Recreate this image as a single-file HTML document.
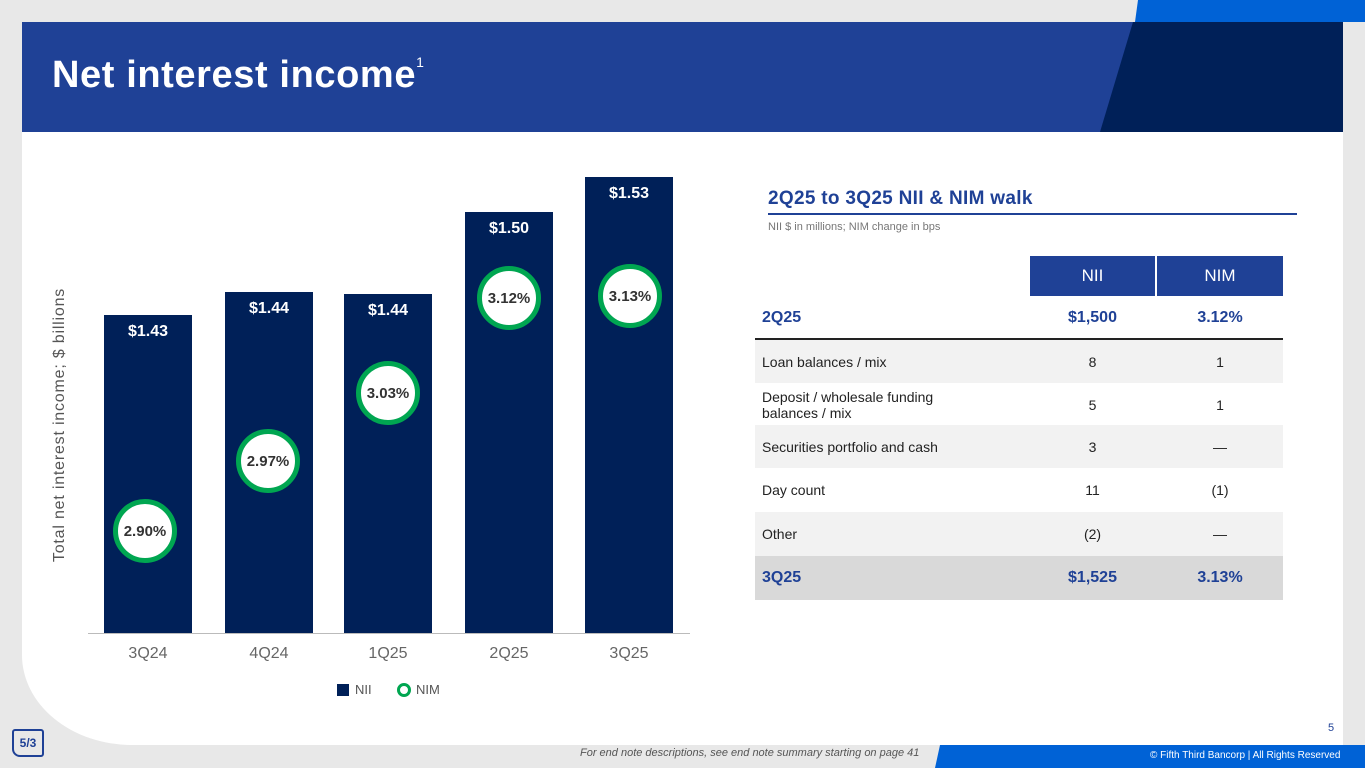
<!DOCTYPE html>
<html><head><meta charset="utf-8"><style>
*{margin:0;padding:0;box-sizing:border-box}
body{width:1365px;height:768px;overflow:hidden;background:#e8e8e8;font-family:"Liberation Sans",sans-serif;position:relative}
.a{position:absolute}
.panel{left:22px;top:22px;width:1321px;height:723px;background:#fff;border-bottom-left-radius:110px 90px}
.bar{position:absolute;background:#002058;width:88px;color:#fff;font-weight:bold;font-size:16px;text-align:center;padding-top:8px}
.c{position:absolute;width:64px;height:64px;border-radius:50%;border:5px solid #00a651;background:#fff;color:#333;font-weight:bold;font-size:15px;display:flex;align-items:center;justify-content:center;margin:-32px 0 0 -32px}
.xl{position:absolute;top:645px;font-size:16px;color:#666;width:88px;text-align:center}
.row{position:absolute;left:755px;width:528px;height:43px;font-size:14px;color:#222}
.row span{position:absolute;top:50%;transform:translateY(-50%)}
.n{left:275px;width:125px;text-align:center}.m{left:402px;width:126px;text-align:center}
.l{left:7px;line-height:16px}
</style></head><body>
<div class="a panel"></div>
<div class="a" style="left:22px;top:22px;width:1321px;height:110px;background:#1f4196"></div>
<svg class="a" style="left:0;top:0" width="1365" height="140"><polygon points="1138,0 1343,0 1343,22 1135,22" fill="#0062d6"/><polygon points="1133,22 1343,22 1343,132 1100,132" fill="#002058"/></svg>
<div class="a" style="left:1343px;top:0;width:22px;height:22px;background:#0062d6"></div>
<div class="a" style="left:52px;top:54px;color:#fff;font-size:38px;font-weight:bold;letter-spacing:0.6px">Net interest income<sup style="font-size:14px;font-weight:normal;vertical-align:20px">1</sup></div>
<div class="a" style="left:60px;top:425px;transform:translate(-50%,-50%) rotate(-90deg);font-size:16px;color:#555;white-space:nowrap;letter-spacing:0.8px">Total net interest income; $ billions</div>
<div class="a" style="left:88px;top:633px;width:602px;height:1px;background:#bbb"></div>
<div class="bar" style="left:104px;top:315px;height:318px">$1.43</div>
<div class="bar" style="left:225px;top:292px;height:341px">$1.44</div>
<div class="bar" style="left:344px;top:294px;height:339px">$1.44</div>
<div class="bar" style="left:465px;top:212px;height:421px">$1.50</div>
<div class="bar" style="left:585px;top:177px;height:456px">$1.53</div>
<div class="c" style="left:145px;top:531px">2.90%</div>
<div class="c" style="left:268px;top:461px">2.97%</div>
<div class="c" style="left:388px;top:393px">3.03%</div>
<div class="c" style="left:509px;top:298px">3.12%</div>
<div class="c" style="left:630px;top:296px">3.13%</div>
<div class="xl" style="left:104px">3Q24</div><div class="xl" style="left:225px">4Q24</div><div class="xl" style="left:344px">1Q25</div><div class="xl" style="left:465px">2Q25</div><div class="xl" style="left:585px">3Q25</div>
<div class="a" style="left:337px;top:684px;width:12px;height:12px;background:#002058"></div>
<div class="a" style="left:355px;top:682px;font-size:13px;color:#555">NII</div>
<div class="a" style="left:397px;top:683px;width:14px;height:14px;border-radius:50%;border:3px solid #00a651"></div>
<div class="a" style="left:416px;top:682px;font-size:13px;color:#555">NIM</div>
<div class="a" style="left:768px;top:188px;font-size:19px;font-weight:bold;color:#1f4196;letter-spacing:0.3px">2Q25 to 3Q25 NII &amp; NIM walk</div>
<div class="a" style="left:768px;top:213px;width:529px;height:2px;background:#1f4196"></div>
<div class="a" style="left:768px;top:221px;font-size:11px;color:#777">NII $ in millions; NIM change in bps</div>
<div class="a" style="left:1030px;top:256px;width:125px;height:40px;background:#1f4196;color:#fff;font-size:17px;text-align:center;line-height:40px">NII</div>
<div class="a" style="left:1157px;top:256px;width:126px;height:40px;background:#1f4196;color:#fff;font-size:17px;text-align:center;line-height:40px">NIM</div>
<div class="row" style="top:297px;color:#1f4196;font-weight:bold;font-size:16px;border-bottom:2px solid #222"><span class="l">2Q25</span><span class="n">$1,500</span><span class="m">3.12%</span></div>
<div class="row" style="top:340px;background:#f2f2f2"><span class="l">Loan balances / mix</span><span class="n">8</span><span class="m">1</span></div>
<div class="row" style="top:383px"><span class="l">Deposit / wholesale funding<br>balances / mix</span><span class="n">5</span><span class="m">1</span></div>
<div class="row" style="top:425px;background:#f2f2f2"><span class="l">Securities portfolio and cash</span><span class="n">3</span><span class="m">—</span></div>
<div class="row" style="top:468px;height:44px"><span class="l">Day count</span><span class="n">11</span><span class="m">(1)</span></div>
<div class="row" style="top:512px;height:44px;background:#f2f2f2"><span class="l">Other</span><span class="n">(2)</span><span class="m">—</span></div>
<div class="row" style="top:556px;height:44px;background:#d9d9d9;color:#1f4196;font-weight:bold;font-size:16px"><span class="l">3Q25</span><span class="n">$1,525</span><span class="m">3.13%</span></div>
<div class="a" style="left:1328px;top:722px;font-size:11px;color:#1f4196">5</div>
<div class="a" style="left:580px;top:747px;font-size:11px;font-style:italic;color:#555">For end note descriptions, see end note summary starting on page 41</div>
<svg class="a" style="left:0;top:745px" width="1365" height="23"><polygon points="940,0 1365,0 1365,23 935,23" fill="#0062d6"/></svg>
<div class="a" style="left:1150px;top:750px;font-size:10px;color:#fff">© Fifth Third Bancorp | All Rights Reserved</div>
<div class="a" style="left:12px;top:729px;width:32px;height:28px;border:2px solid #1f4196;border-radius:3px 3px 3px 8px;font-size:12px;font-weight:bold;color:#1f4196;text-align:center;line-height:24px">5/3</div>
</body></html>
